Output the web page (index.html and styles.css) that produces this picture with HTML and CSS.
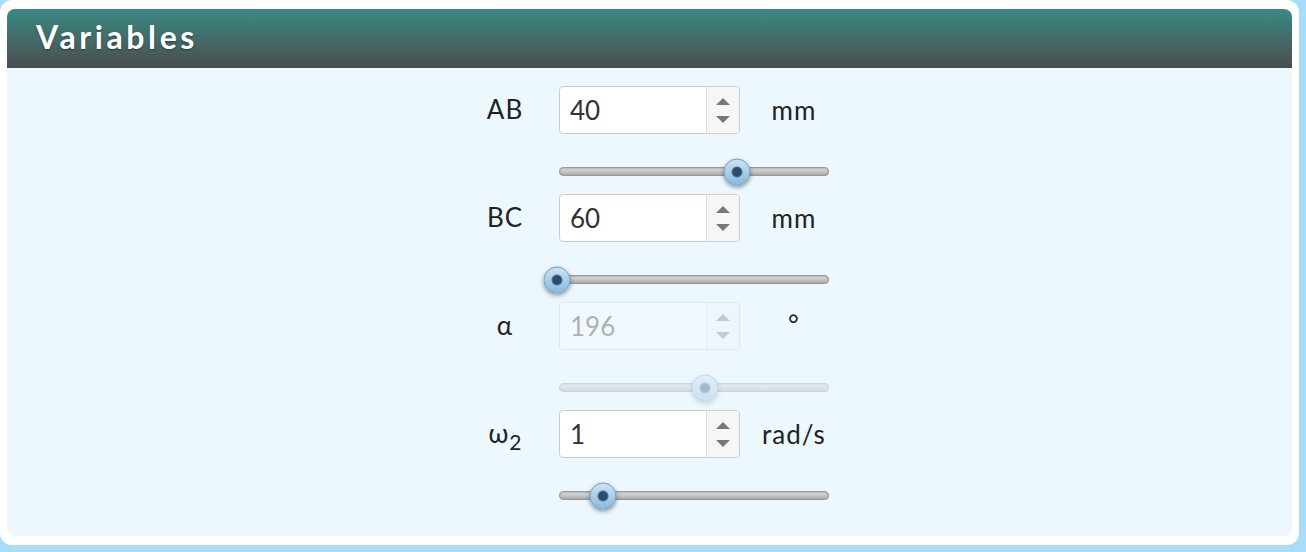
FILE: index.html
```html
<!DOCTYPE html>
<html lang="es">
<head>
    <meta charset="UTF-8">
    <meta name="viewport" content="width=device-width, initial-scale=1.0">
    <title>Variables</title>
    <link rel="stylesheet" href="styles.css">
</head>
<body>
    <div class="tarjeta">
        <div class="panel">
            <div class="cabecera">Variables</div>
            <div class="cuerpo">
                <div class="rejilla">
                    <div class="etiqueta"><span>AB</span></div>
                    <div class="entrada">
                        <input type="text" value="40">
                        <div class="flechas"><span class="arriba"></span><span class="abajo"></span></div>
                    </div>
                    <div class="unidad">mm</div>
                    <div class="deslizador"><div class="pista"><span class="perilla" style="left: 66%"></span></div></div>

                    <div class="etiqueta"><span>BC</span></div>
                    <div class="entrada">
                        <input type="text" value="60">
                        <div class="flechas"><span class="arriba"></span><span class="abajo"></span></div>
                    </div>
                    <div class="unidad">mm</div>
                    <div class="deslizador"><div class="pista"><span class="perilla" style="left: -1%"></span></div></div>

                    <div class="etiqueta"><span>α</span></div>
                    <div class="entrada desactivado">
                        <input type="text" value="196" disabled>
                        <div class="flechas"><span class="arriba"></span><span class="abajo"></span></div>
                    </div>
                    <div class="unidad grado">°</div>
                    <div class="deslizador desactivado"><div class="pista"><span class="perilla" style="left: 54%"></span></div></div>

                    <div class="etiqueta"><span>ω<sub>2</sub></span></div>
                    <div class="entrada">
                        <input type="text" value="1">
                        <div class="flechas"><span class="arriba"></span><span class="abajo"></span></div>
                    </div>
                    <div class="unidad">rad/s</div>
                    <div class="deslizador"><div class="pista"><span class="perilla" style="left: 16%"></span></div></div>
                </div>
            </div>
        </div>
    </div>
</body>
</html>
```

FILE: styles.css
```css
body {
    margin: 0;
    background-color: #a8ddfa;
    font-family: Lato, 'Open Sans', sans-serif;
}
.tarjeta {
    width: 1299px;
    background-color: #fff;
    border-radius: 12px;
    padding: 9px 7px;
    box-sizing: border-box;
}
.panel {
    border-radius: 8px;
    overflow: hidden;
    background-color: #ecf7fe;
}
.cabecera {
    height: 59px;
    line-height: 56px;
    padding-left: 29px;
    background: linear-gradient(to bottom, #3a8a84, #4b4d4e);
    color: #fff;
    font-size: 32px;
    font-weight: 700;
    letter-spacing: 3.6px;
    text-shadow: 0 1px 2px rgba(0, 0, 0, 0.4);
}
.cuerpo {
    display: flex;
    justify-content: center;
    padding: 18px 0 18px 5px;
}
.rejilla {
    display: grid;
    grid-template-columns: 84px 181px 89px;
}
.etiqueta {
    display: flex;
    align-items: center;
    justify-content: center;
    padding-right: 24px;
    padding-bottom: 2px;
    font-size: 26px;
    letter-spacing: 1px;
    color: #222;
}
.etiqueta sub {
    font-size: 21px;
    vertical-align: -7px;
    line-height: 0;
    letter-spacing: 0;
}
.entrada {
    display: flex;
    height: 48px;
    border: 1px solid #ccc;
    border-radius: 4px;
    background-color: #fff;
    box-sizing: border-box;
    overflow: hidden;
}
.entrada input {
    flex: 1;
    min-width: 0;
    border: none;
    outline: none;
    background: transparent;
    padding: 0 0 0 10px;
    font-family: Lato, sans-serif;
    font-size: 26px;
    color: #333;
}
.flechas {
    width: 32px;
    border-left: 1px solid #ddd;
    background-color: #f6f6f6;
    display: flex;
    flex-direction: column;
    align-items: center;
    justify-content: center;
    gap: 11px;
}
.arriba, .abajo {
    width: 0;
    height: 0;
    border-left: 7px solid transparent;
    border-right: 7px solid transparent;
}
.arriba {
    border-bottom: 7px solid #777;
}
.abajo {
    border-top: 7px solid #777;
}
.unidad {
    display: flex;
    align-items: center;
    justify-content: center;
    padding-left: 19px;
    font-size: 26px;
    letter-spacing: 1px;
    color: #222;
}
.grado {
    align-items: flex-start;
    padding-top: 6px;
}
.deslizador {
    grid-column: 2 / 4;
    height: 60px;
    padding-top: 33px;
    box-sizing: border-box;
}
.pista {
    position: relative;
    height: 7px;
    border: 1px solid #999;
    border-radius: 4px;
    background: linear-gradient(to bottom, #e4e4e4, #a9a9a9);
    box-shadow: inset 0 1px 2px rgba(0, 0, 0, 0.2);
}
.perilla {
    position: absolute;
    top: 50%;
    width: 27px;
    height: 27px;
    border-radius: 50%;
    transform: translate(-50%, -50%);
    background: radial-gradient(circle at 50% 50%, #2d4c68 0 4px, #4a7aa0 5px, transparent 6px),
        linear-gradient(to bottom, #cbe3f4, #8cb9db);
    border: 1px solid #6f9fc3;
    box-sizing: border-box;
    box-shadow: 0 2px 4px rgba(0, 0, 0, 0.4);
}
.desactivado {
    opacity: 0.35;
}
```
